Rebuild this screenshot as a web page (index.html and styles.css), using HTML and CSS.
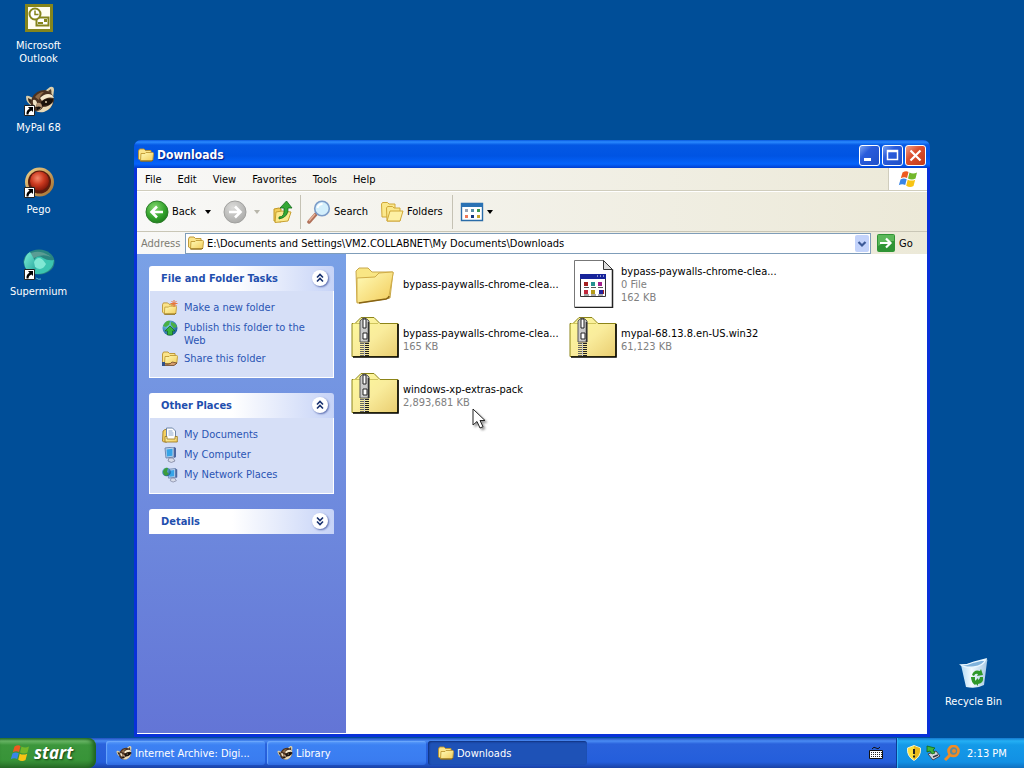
FILE: index.html
```html
<!DOCTYPE html>
<html lang="en">
<head>
<meta charset="utf-8">
<title>Downloads</title>
<link rel="stylesheet" href="styles.css">
</head>
<body>
<svg class="defs" aria-hidden="true">
  <defs>
    <linearGradient id="gFold" x1="0" y1="0" x2="1" y2="1"><stop offset="0" stop-color="#fffbb8"/><stop offset="1" stop-color="#f2cc5a"/></linearGradient>
    <linearGradient id="gZip" x1="0" y1="0" x2="1" y2="1"><stop offset="0" stop-color="#fdfa9c"/><stop offset=".5" stop-color="#f9ec9c"/><stop offset="1" stop-color="#e9cd70"/></linearGradient>
    <radialGradient id="gGreen" cx=".4" cy=".3" r=".75"><stop offset="0" stop-color="#84d670"/><stop offset=".6" stop-color="#35a52e"/><stop offset="1" stop-color="#1d7a1c"/></radialGradient>
    <radialGradient id="gGray" cx=".4" cy=".3" r=".75"><stop offset="0" stop-color="#dcdcda"/><stop offset="1" stop-color="#a9a9a7"/></radialGradient>
    <radialGradient id="gRed" cx=".4" cy=".35" r=".7"><stop offset="0" stop-color="#f4886a"/><stop offset=".5" stop-color="#cc3a20"/><stop offset="1" stop-color="#7c1408"/></radialGradient>
    <linearGradient id="gGold" x1="0" y1="0" x2="1" y2="1"><stop offset="0" stop-color="#f0d48c"/><stop offset="1" stop-color="#a06a2c"/></linearGradient>
    <linearGradient id="gTeal" x1="0" y1="0" x2="1" y2="1"><stop offset="0" stop-color="#7cf0d8"/><stop offset="1" stop-color="#1c9c94"/></linearGradient>
    <linearGradient id="gBin" x1="0" y1="0" x2="1" y2="0"><stop offset="0" stop-color="#b4daf4"/><stop offset=".4" stop-color="#f2faff"/><stop offset="1" stop-color="#a6c8e4"/></linearGradient>
    <radialGradient id="gGlobe" cx=".35" cy=".3" r=".8"><stop offset="0" stop-color="#7fd0e8"/><stop offset="1" stop-color="#124f94"/></radialGradient>
    <symbol id="folder" viewBox="0 0 16 16"><path d="M.5 4l1-2h4.500l1.500 1.500h5.500l.5 9.500H2L.5 12z" fill="#fbe48a" stroke="#b8902c" stroke-width=".9"/><path d="M3 6.500h4l1-1h6.500q1 0 1 1l-.7 6.500-1 1H2.500z" fill="url(#gFold)" stroke="#c09a34" stroke-width=".9"/><path d="M2.500 14h11.300l1-1" fill="none" stroke="#7c5c10"/></symbol>
    <symbol id="zip" viewBox="0 0 48 42"><path d="M1 7.500h3L10 1.500h13l6 6h18v33H1z" fill="url(#gZip)" stroke="#8c8418"/><path d="M2 41h45V8" fill="none" stroke="#000" stroke-width="1.600"/><path d="M2 7.500h25" stroke="#cfc55c" fill="none"/>
      <path d="M9 5q4-6 9 0v21H9z" fill="#c9c9c9" stroke="#555"/><path d="M12 3h3v9h-3z" fill="#fff" stroke="#222"/><path d="M12 17h4v6h-4z" fill="#fff" stroke="#222"/><path d="M17.500 6v20" stroke="#333" stroke-width="1.500"/>
      <path d="M11 27v13" stroke="#666" stroke-width="4" stroke-dasharray="1 1"/><path d="M16 27v13" stroke="#222" stroke-width="4" stroke-dasharray="1 1"/><path d="M13.500 27v13" stroke="#ccc"/></symbol>
    <symbol id="shortcut" viewBox="0 0 11 11"><path d="M.5.5h10v10H.5z" fill="#fff" stroke="#222"/><path d="M4 2h5v5L7.500 5.500Q4.500 6.500 4.500 9.500H2.500Q2 5.500 5.500 3.700z" fill="#000"/></symbol>
    <symbol id="raccoon" viewBox="0 0 30 28"><path d="M1 11q0-2 3-1l4 2 3 8-4 0q-6-3-6-9z" fill="#d8cba8"/><path d="M3 12l4 2-1 4q-3-2-3-6z" fill="#3a2a1c"/><path d="M20 5l5-4q4-1 4 3l-1 8z" fill="#dccfac"/><path d="M23 5l3-2q1 3 0 6z" fill="#54402c"/><path d="M7 12Q11 4 20 4q8 2 9 10-1 9-11 12-9 1-12-6-1-4 1-8z" fill="#4a3222"/><path d="M10 11q4-5 9-5-4 3-5 8z" fill="#8d6a48"/><path d="M15 12q6-6 12-3l2 3q-7-2-12 3z" fill="#f4e8cc"/><path d="M16 16q5-5 12-3 0 4-4 6l-7 1z" fill="#1a120c"/><path d="M8 14q3-1 4 3l-1 4q-4-2-3-7z" fill="#efe2c4"/><path d="M18 21q6 0 10-5-1 7-9 10-5 1-8-1 5 0 7-4z" fill="#e9dab8"/><path d="M12 17q4-1 5 3-1 4-4 4-3-2-1-7z" fill="#b49676"/><path d="M11 21q3-1 5 0-1 3-4 3z" fill="#140e0a"/><circle cx="21" cy="16" r="1" fill="#d8c8a8"/></symbol>
    <symbol id="flag" viewBox="0 0 20 18"><path d="M4.500 2.500Q8 .5 10.500 2L9 8Q6 6.500 2.800 8.200z" fill="#ee5a20"/><path d="M11.500 2.500Q15 4.500 19 2.500L17.500 8.500Q14 10.500 10 8.500z" fill="#73b72a"/><path d="M2.500 9.500Q5.500 7.700 8.700 9.300L7.200 15Q4 13.500.8 15.200z" fill="#3a86e8"/><path d="M9.700 9.700Q13.500 11.500 17.200 9.700L15.500 16Q12 18 8.200 15.700z" fill="#f8c414"/></symbol>
    <symbol id="upfold" viewBox="0 0 20 20"><path d="M1 6l5-1 2 1v13l-7-1z" fill="#f2cc58" stroke="#c09824"/><path d="M3 9l6-1 9 1-3 9-13 1.500z" fill="#fce98c" stroke="#c8a030"/></symbol>
    <symbol id="computer" viewBox="0 0 16 16"><path d="M3 1l9-1v10l-8 1z" fill="#b8d0ec" stroke="#6e88b0"/><path d="M4.500 2.500l6-.7v7l-5.500.7z" fill="#36a4e8"/><path d="M12 0l2 1v9l-2 1z" fill="#4c66a0"/><path d="M7 11h4l2 3q-4 3-7 0z" fill="#d8dce8" stroke="#7e84a0" stroke-width=".8"/></symbol>
    <symbol id="chev" viewBox="0 0 16 16"><path d="M5 7.500l3-3 3 3M5 11.500l3-3 3 3" fill="none" stroke="#17306e" stroke-width="1.600"/></symbol>
  </defs>
</svg>

<main class="desktop">
  <nav class="shortcuts" aria-label="Desktop">
    <a class="shortcut" href="#outlook">
      <svg class="icon32" viewBox="0 0 32 32"><path d="M2 2h28v28H2z" fill="#85851c"/><path d="M5 5h22v22H5z" fill="#fffdf0"/><path d="M13.500 15.500h12v8h-12z" fill="#fff" stroke="#85851c" stroke-width="2"/><circle cx="12" cy="12" r="5.500" fill="#fff" stroke="#85851c" stroke-width="2"/><path d="M12 8.500v4h3.500" fill="none" stroke="#85851c" stroke-width="1.500"/><path d="M21 17h3v3h-3zM15 20h5v2h-5z" fill="#85851c"/></svg>
      <span>Microsoft Outlook</span>
    </a>
    <a class="shortcut" href="#mypal">
      <svg class="icon32" viewBox="0 0 32 32"><use href="#raccoon" x="2" y="2" width="30" height="28"/><use href="#shortcut" x="1" y="21" width="11" height="11"/></svg>
      <span>MyPal 68</span>
    </a>
    <a class="shortcut" href="#pego">
      <svg class="icon32" viewBox="0 0 32 32"><circle cx="16.500" cy="16" r="14.500" fill="url(#gGold)"/><circle cx="16.500" cy="16" r="11.500" fill="#5c1c0e"/><circle cx="16.500" cy="15" r="9.500" fill="url(#gRed)"/><use href="#shortcut" x="1" y="21" width="11" height="11"/></svg>
      <span>Pego</span>
    </a>
    <a class="shortcut" href="#supermium">
      <svg class="icon32" viewBox="0 0 32 32"><ellipse cx="16" cy="14" rx="15.500" ry="12.500" fill="#2a8580"/><path d="M3 8q12-9 25 1-8-4-17 1z" fill="#5a9c94"/><path d="M1 14Q2 7 7 4q3 5 5 9l3 10-5 3Q2 24 1 14z" fill="url(#gTeal)"/><path d="M11 13q3-7 9-3 5 3 11 2-1 10-10 13-7 2-11 0 6-4 1-12z" fill="#3cc4b0"/><path d="M11 14q4-7 9-2l3 4q-4 8-11 3z" fill="#80e8d4"/><path d="M13 30q3 2 5 1" fill="none" stroke="#58b8c8"/><use href="#shortcut" x="1" y="21" width="11" height="11"/></svg>
      <span>Supermium</span>
    </a>
  </nav>

  <a class="shortcut bin" href="#bin">
    <svg class="icon32" viewBox="0 0 32 32"><path d="M3 7q8-1 14-3l11-3q2 0 1 3l-3 23q-7 4-18 2z" fill="url(#gBin)"/><path d="M3 7q7 0 13-3l12-3q-3 7-12 8-9 1-13-2z" fill="#7fb2dc" stroke="#eaf7ff" stroke-width="1.300"/><g fill="#2f982b"><path d="M14 17q2-6 8-4l1-2 2 6-6 1 1-2q-3-1-4 2z"/><path d="M25 19q1 6-5 7v2l-4-4 4-4v2q2-1 2-3z"/><path d="M13 19l4 0 0 3q0 2 2 3l-2 2q-4-3-4-8z"/></g></svg>
    <span>Recycle Bin</span>
  </a>

  <section class="window" aria-label="Downloads">
    <header class="titlebar">
      <svg class="icon16"><use href="#folder"/></svg>
      <h1>Downloads</h1>
      <button class="winbtn" aria-label="Minimize"><svg viewBox="0 0 19 19"><path d="M4 12h7v3H4z" fill="#fff"/></svg></button>
      <button class="winbtn" aria-label="Maximize"><svg viewBox="0 0 19 19"><path d="M4.500 4.500h10v9h-10zM4 5.500h11" fill="none" stroke="#fff" stroke-width="1.500"/></svg></button>
      <button class="winbtn close" aria-label="Close"><svg viewBox="0 0 19 19"><path d="M4.500 4.500l10 10m0-10l-10 10" stroke="#fff" stroke-width="2.200"/></svg></button>
    </header>
    <div class="menubar">
      <nav class="menus"><button>File</button><button>Edit</button><button>View</button><button>Favorites</button><button>Tools</button><button>Help</button></nav>
      <div class="brand"><svg viewBox="0 0 20 18"><use href="#flag"/></svg></div>
    </div>
    <div class="toolbar">
      <button class="tool back"><svg class="icon24" viewBox="0 0 24 24"><circle cx="12" cy="12" r="11" fill="url(#gGreen)" stroke="#2c7c2a"/><path d="M18 12H7m5-5.500L6.500 12l5.500 5.500" fill="none" stroke="#fff" stroke-width="2.600"/></svg><span>Back</span><i class="caret"></i></button>
      <button class="tool forward" aria-label="Forward"><svg class="icon24" viewBox="0 0 24 24"><circle cx="12" cy="12" r="11" fill="url(#gGray)" stroke="#a0a09e"/><path d="M6 12h11m-5-5.500l5.500 5.500-5.500 5.500" fill="none" stroke="#fff" stroke-width="2.600"/></svg><i class="caret dim"></i></button>
      <button class="tool up" aria-label="Up"><svg class="icon24" viewBox="0 0 24 24"><use href="#upfold" x="1" y="3" width="20" height="20"/><path d="M7 17q6 0 5-9H8l6.500-7L20 8h-4q1 9-9 11z" fill="#35a835" stroke="#146c1c" stroke-width=".8"/></svg></button>
      <i class="sep"></i>
      <button class="tool search"><svg class="icon24" viewBox="0 0 24 24"><path d="M9 14l-7 8" stroke="#b07058" stroke-width="3.500" stroke-linecap="round"/><path d="M8 14l-6 7" stroke="#e8b49a" stroke-width="1.300"/><circle cx="15" cy="8.500" r="7.300" fill="#d3effc" stroke="#7c9cc8" stroke-width="1.600"/><path d="M10.500 8q1-4 5-4" fill="none" stroke="#fff" stroke-width="2"/></svg><span>Search</span></button>
      <button class="tool folders"><svg class="icon24" viewBox="0 0 24 24"><path d="M1.500 4l1-1.500h5L9 4h6v13H2z" fill="#fbe88c" stroke="#d0a838"/><path d="M6.500 8l1-1.500h5L14 8h6v13H7z" fill="#fae88c" stroke="#d0a838"/><path d="M7 21l3-10h13l-3 10z" fill="#fdf0a4" stroke="#d0a838"/></svg><span>Folders</span></button>
      <i class="sep"></i>
      <button class="tool views" aria-label="Views"><svg class="icon24" viewBox="0 0 24 24"><path d="M1.500 3.500h21v17h-21z" fill="#fff" stroke="#2a6ca8" stroke-width="1.400"/><path d="M1 3h22v4H1z" fill="#2a72b4"/><path d="M5 9h3v3H5z" fill="#9aa4b4"/><path d="M11 9h3v3h-3z" fill="#5890a8"/><path d="M17 9h3v3h-3z" fill="#3c9850"/><path d="M5 15h3v3H5z" fill="#f07858"/><path d="M11 15h3v3h-3z" fill="#14387c"/><path d="M17 15h3v3h-3z" fill="#c8a428"/></svg><i class="caret"></i></button>
    </div>
    <form class="address">
      <label for="path">Address</label>
      <div class="combo"><svg class="icon16"><use href="#folder"/></svg><input id="path" type="text" value="E:\Documents and Settings\VM2.COLLABNET\My Documents\Downloads"><button type="button" aria-label="Show addresses"><svg viewBox="0 0 14 18"><path d="M3.500 7L7 10.500 10.500 7" fill="none" stroke="#3c5a98" stroke-width="2.200"/></svg></button></div>
      <button type="button" class="go"><svg viewBox="0 0 18 18"><rect width="18" height="18" rx="2" fill="#2f9435"/><path d="M1 1h16v6q-8 0-16 5z" fill="#5cb85a"/><path d="M3 9h10M9 4.500L13.500 9 9 13.500" fill="none" stroke="#fff" stroke-width="2.200"/></svg><span>Go</span></button>
    </form>
    <div class="content">
      <aside class="sidebar">
        <section class="panel">
          <h2>File and Folder Tasks<button aria-label="Collapse"><svg viewBox="0 0 16 16"><use href="#chev"/></svg></button></h2>
          <ul>
            <li><svg class="icon16" viewBox="0 0 16 16"><use href="#folder" y="1" width="15" height="15"/><path d="M12 0v7M8.500 3.500h7M9.500 1l5 5m0-5l-5 5" stroke="#e8743c"/></svg><a href="#new">Make a new folder</a></li>
            <li><svg class="icon16" viewBox="0 0 16 16"><circle cx="8" cy="8" r="7.500" fill="url(#gGlobe)"/><path d="M1 6q3-6 7-5l-1 4-3 2zM9 2q5 1 6 5l-3 1-3-3z" fill="#49b045"/><path d="M8 6l5 5h-2.500v4h-5v-4H3z" fill="#38b43c" stroke="#136420" stroke-width=".7"/></svg><a href="#publish">Publish this folder to the Web</a></li>
            <li><svg class="icon16" viewBox="0 0 16 16"><use href="#folder" y="-1" width="16" height="16"/><path d="M1 12q6 3 9-1l5 1-3 2.500H2z" fill="#d49c6c" stroke="#6c4828" stroke-width=".8"/><path d="M0 11h3v4H0z" fill="#305088"/></svg><a href="#share">Share this folder</a></li>
          </ul>
        </section>
        <section class="panel">
          <h2>Other Places<button aria-label="Collapse"><svg viewBox="0 0 16 16"><use href="#chev"/></svg></button></h2>
          <ul>
            <li><svg class="icon16" viewBox="0 0 16 16"><path d="M1 4l2-1.500h2V15H1.500L.5 14z" fill="#f4d060" stroke="#98731c" stroke-width=".8"/><path d="M4.500 1h6l3 3v10h-9z" fill="#fff" stroke="#6f86a8"/><path d="M6.500 4h4m-4 2h5m-5 2h5" stroke="#88a4cc"/><path d="M3 9.500h2v2.500h8V9.500h2.300V15H3z" fill="url(#gFold)" stroke="#98731c" stroke-width=".8"/></svg><a href="#docs">My Documents</a></li>
            <li><svg class="icon16"><use href="#computer"/></svg><a href="#computer">My Computer</a></li>
            <li><svg class="icon16" viewBox="0 0 16 16"><use href="#computer" x="3" y="1" width="14" height="15"/><circle cx="4.500" cy="5" r="4.300" fill="url(#gGlobe)"/><path d="M1 4q2-4 5-3L5 5l2 2-3 2q-3-1-3-5z" fill="#3c9c3c"/></svg><a href="#network">My Network Places</a></li>
          </ul>
        </section>
        <section class="panel closed">
          <h2>Details<button aria-label="Expand"><svg class="flip" viewBox="0 0 16 16"><use href="#chev"/></svg></button></h2>
        </section>
      </aside>
      <div class="files">
        <a class="file" href="#f1"><svg viewBox="0 0 48 48"><path d="M5 11l3-3h9l4 4 21 0-3 26-33 5z" fill="#f9e684" stroke="#c8a84c"/><path d="M6 18l18-1 4-4 13-1q2 0 1 2l-4 22q0 2-3 3L8 43q-2 0-2-2z" fill="url(#gFold)" stroke="#d0ac48"/><path d="M8 43l27-4q3-1 3-3" fill="none" stroke="#876416" stroke-width="1.500"/></svg><div><b>bypass-paywalls-chrome-clea...</b></div></a>
        <a class="file" href="#f2"><svg viewBox="0 0 48 48"><path d="M5.500.5h29l9 9v38h-38z" fill="#fff" stroke="#777"/><path d="M43.500 9.500V47.500H6" fill="none" stroke="#222" stroke-width="1.500"/><path d="M34.500.5v9h9z" fill="#ddd" stroke="#333"/><path d="M11.500 15.500h25v21h-25z" fill="#fff" stroke="#333"/><path d="M11 14h26v5H11z" fill="#17249a"/><path d="M28 16h1m2 0h1m2 0h1" stroke="#fff"/><path d="M15 22h4v4h-4zM31 30h4v4h-4z" fill="#a42020"/><path d="M22 22h4v4h-4z" fill="#249090"/><path d="M29 22h4v4h-4z" fill="#a4208c"/><path d="M15 30h4v4h-4z" fill="#c0283c"/><path d="M22 30h4v4h-4z" fill="#b49a18"/><path d="M30 30h4v4h-4z" fill="#24249c"/><path d="M15 27.500h5m2 0h5m2 0h5M15 35h5m2 0h5m2 0h5" stroke="#555"/></svg><div><b>bypass-paywalls-chrome-clea...</b><small>0 File</small><small>162 KB</small></div></a>
        <a class="file" href="#f3"><svg viewBox="0 0 48 48"><use href="#zip" width="48" height="42"/></svg><div><b>bypass-paywalls-chrome-clea...</b><small>165 KB</small></div></a>
        <a class="file" href="#f4"><svg viewBox="0 0 48 48"><use href="#zip" width="48" height="42"/></svg><div><b>mypal-68.13.8.en-US.win32</b><small>61,123 KB</small></div></a>
        <a class="file" href="#f5"><svg viewBox="0 0 48 48"><use href="#zip" width="48" height="42"/></svg><div><b>windows-xp-extras-pack</b><small>2,893,681 KB</small></div></a>
      </div>
    </div>
  </section>
  <svg class="cursor" viewBox="0 0 14 22"><path d="M1 1v16l4-3.500L8 20l3-1.300-3-6.200h5z" fill="#fff" stroke="#222"/></svg>
</main>

<footer class="taskbar">
  <button class="start"><svg viewBox="0 0 20 18"><use href="#flag"/></svg><span>start</span></button>
  <div class="tasks">
    <button class="task"><svg class="icon16" viewBox="0 0 30 28"><use href="#raccoon"/></svg><span>Internet Archive: Digi...</span></button>
    <button class="task"><svg class="icon16" viewBox="0 0 30 28"><use href="#raccoon"/></svg><span>Library</span></button>
    <button class="task active"><svg class="icon16"><use href="#folder"/></svg><span>Downloads</span></button>
  </div>
  <button class="lang" aria-label="Keyboard"><svg class="icon16" viewBox="0 0 16 16"><path d="M4 4q2-3 4-1t4-1" fill="none" stroke="#111"/><path d="M1.500 5.500h13v8h-13z" fill="#fff" stroke="#111"/><path d="M3 7.500h11m-11 2h11m-11 2h11" stroke="#222" stroke-dasharray="1 1"/></svg></button>
  <div class="tray">
    <svg class="icon16" viewBox="0 0 16 16"><path d="M8 .5l6.500 2.500q1 8-6.500 12.500Q.5 11 1.500 3z" fill="#fce03c" stroke="#f4f0d0"/><path d="M8 1l6 2.300q.6 7-6 11.700z" fill="#e8b81c"/><path d="M8 4v5m0 1.500v2" stroke="#222" stroke-width="2"/></svg>
    <svg class="icon16" viewBox="0 0 16 16"><path d="M3 9l8-3 4 5-7 4z" fill="#d4d8dc" stroke="#445"/><path d="M8 12l5-2" stroke="#334" stroke-width="1.500"/><path d="M2 1l8 2-2 2 2 3-3 1-2-3-3 1z" fill="#3cb43c" stroke="#146414" stroke-width=".8"/></svg>
    <svg class="icon16" viewBox="0 0 16 16"><circle cx="9.500" cy="6" r="5" fill="#5b8a9a" stroke="#f08c24" stroke-width="2.600"/><path d="M6 10l-5 5" stroke="#f08c24" stroke-width="3"/><circle cx="10" cy="6" r="2" fill="#e88a2c"/></svg>
    <time>2:13 PM</time>
  </div>
</footer>
</body>
</html>
```
FILE: styles.css
```css
* { box-sizing: border-box; }
body {
  margin: 0;
  height: 100vh;
  display: flex;
  flex-direction: column;
  overflow: hidden;
  background: #004e98;
  color: #000;
  font: 11px/13px "DejaVu Sans Condensed", "Noto Sans", sans-serif;
}
button, input { font: inherit; color: inherit; margin: 0; padding: 0; border: 0; background: none; }
a { color: inherit; text-decoration: none; }
h1, h2, ul { margin: 0; padding: 0; font-size: 11px; }
span, b, a { white-space: nowrap; }
svg { display: block; flex: none; }
.defs { position: absolute; width: 0; height: 0; }
.icon16 { width: 16px; height: 16px; }
.icon24 { width: 24px; height: 24px; }
.icon32 { width: 32px; height: 32px; }

/* Desktop */
.desktop { position: relative; flex: 1; min-height: 0; }
.shortcuts { display: grid; grid-auto-rows: 82px; width: 77px; padding-top: 2px; }
.shortcut { display: flex; flex-direction: column; align-items: center; gap: 5px; width: 77px; color: #fff; text-align: center; }
.shortcut span { white-space: normal; }
.bin { position: absolute; right: 12px; bottom: 30px; }
.cursor { position: absolute; left: 472px; top: 408px; width: 14px; height: 22px; filter: drop-shadow(2px 2px 1px #0006); }

/* Window */
.window {
  position: absolute;
  inset: 140px 94px 1px 134px;
  display: flex;
  flex-direction: column;
  padding: 0 3px 3px;
  background: #0831d9;
  border-radius: 7px 7px 0 0;
  overflow: hidden;
}
.titlebar {
  display: flex;
  align-items: center;
  gap: 2px;
  flex: none;
  height: 28px;
  margin: 0 -3px;
  padding: 2px 4px 0;
  background: linear-gradient(#0a5ae0, #2a8aff 2px, #0458e4 5px, #0054e3 16px, #0463fb 24px, #003dd0);
  color: #fff;
}
.titlebar h1 { flex: 1; padding-left: 1px; font-size: 12px; line-height: 16px; text-shadow: 1px 1px 1px #0a1883; }
.winbtn { width: 21px; height: 21px; border: 1px solid #fff; border-radius: 3px; background: linear-gradient(135deg, #7ba2f0, #2a5cdc 35%, #1f4fc8); }
.close { background: linear-gradient(135deg, #f0a088, #dc5030 40%, #c23a18); }
.menubar { display: flex; flex: none; height: 23px; background: linear-gradient(90deg, #f8f8f7, #ece9d8); border-bottom: 1px solid #d0cdbd; }
.menus { display: flex; flex: 1; }
.menus button { padding: 0 8px; }
.brand { display: grid; place-items: center; width: 39px; background: #fff; border-left: 1px solid #d0cdbd; }
.brand svg { width: 20px; height: 18px; }
.toolbar { display: flex; align-items: center; flex: none; height: 40px; padding: 0 8px; background: linear-gradient(90deg, #f8f8f7, #ece9d8); border-top: 1px solid #fff; }
.tool { display: flex; align-items: center; gap: 3px; }
.back { width: 78px; }
.forward { width: 49px; }
.up { width: 28px; }
.search { width: 72px; margin-left: 6px; }
.folders { width: 72px; margin-left: 1px; }
.views { margin-left: 7px; }
.caret { border: 3px solid transparent; border-top: 4px solid #000; border-bottom: 0; }
.back .caret { margin-left: auto; margin-right: 12px; }
.forward .caret { margin-left: auto; margin-right: 12px; }
.dim { border-top-color: #b8b6aa; }
.sep { width: 1px; height: 34px; background: #c5c2b4; }
.address { display: flex; align-items: center; flex: none; height: 23px; padding: 0 6px 0 4px; background: linear-gradient(90deg, #f8f8f7, #ece9d8); border-top: 1px solid #c9c6b6; color: #000; }
.address label { width: 44px; color: #7d7b72; }
.combo { display: flex; align-items: center; flex: 1; height: 21px; padding: 1px 1px 1px 2px; border: 1px solid #7f9db9; background: #fff; }
.combo input { flex: 1; min-width: 0; padding: 0 3px; outline: 0; }
.combo button { width: 14px; height: 17px; background: #c3d3fb; border-radius: 2px; }
.go { display: flex; align-items: center; gap: 4px; width: 50px; padding-left: 6px; }
.go svg { width: 18px; height: 18px; }
.content { display: flex; flex: 1; min-height: 0; background: #fff; }

/* Task pane */
.sidebar { flex: none; width: 209px; padding: 12px; background: linear-gradient(#7aa1e6, #6375d6); display: flex; flex-direction: column; gap: 15px; color: #2a55b4; border-bottom: 1px solid #fff; }
.panel h2 { display: flex; align-items: center; justify-content: space-between; height: 25px; padding: 0 6px 0 12px; border-radius: 3px 3px 0 0; background: linear-gradient(90deg, #fff 45%, #c6d3f7); color: #1f4fae; white-space: nowrap; }
.panel h2 button { width: 16px; height: 16px; margin-bottom: 2px; border-radius: 8px; background: #fff; box-shadow: 1px 1px 2px #5a6cae; }
.flip { transform: rotate(180deg); }
.panel ul { display: grid; gap: 4px; padding: 9px 12px 10px; list-style: none; background: #d6dff7; border: 1px solid #fff; border-top: 0; }
.panel li { display: flex; gap: 6px; }
.panel li a { padding-top: 1px; white-space: normal; max-width: 128px; }

/* Files */
.files { flex: 1; display: grid; grid-template-columns: repeat(auto-fill, 218px); grid-auto-rows: 56px; align-content: start; padding: 2px 5px; }
.file { display: flex; align-items: center; gap: 4px; }
.file svg { width: 48px; height: 48px; }
.file div { display: grid; }
.file b { font-weight: 400; }
.file small { font-size: 11px; color: #808080; }

/* Taskbar */
.taskbar { display: flex; flex: none; height: 30px; background: linear-gradient(#1f4fc0, #4a8cf4 3px, #2a62dc 6px, #245edb 24px, #1941a5); color: #fff; }
.start { display: flex; align-items: center; gap: 4px; width: 96px; padding-left: 10px; border-radius: 0 8px 8px 0; background: linear-gradient(#2e7a2e, #6cb868 3px, #3c963c 7px, #389438 22px, #2a702a); box-shadow: inset -3px 0 4px #1e601e; }
.start svg { width: 20px; height: 18px; }
.start span { font: italic bold 17px/20px "Open Sans", sans-serif; text-shadow: 1px 1px 2px #123c12; }
.tasks { display: flex; flex: 1; gap: 2px; padding: 3px 10px; }
.task { display: flex; align-items: center; gap: 3px; flex: 0 1 159px; min-width: 0; padding-left: 10px; border-radius: 3px; background: linear-gradient(#5a9cfa, #3c81f3 4px, #3a7cf0 20px, #2f6ae0); box-shadow: inset 1px 1px 1px #6ca8fc; }
.active { background: #1e52b7; box-shadow: inset 1px 1px 2px #10307c; }
.lang { width: 40px; display: grid; place-items: center; }
.tray { display: flex; align-items: center; gap: 3px; flex: none; width: 128px; padding-left: 9px; border-left: 1px solid #0c3c94; background: linear-gradient(#1478d0, #24b0f4 3px, #149ae8 7px, #1290e4 24px, #0f70c0); box-shadow: inset 1px 0 #32b8f8; }
.tray time { margin-left: 4px; }
```
